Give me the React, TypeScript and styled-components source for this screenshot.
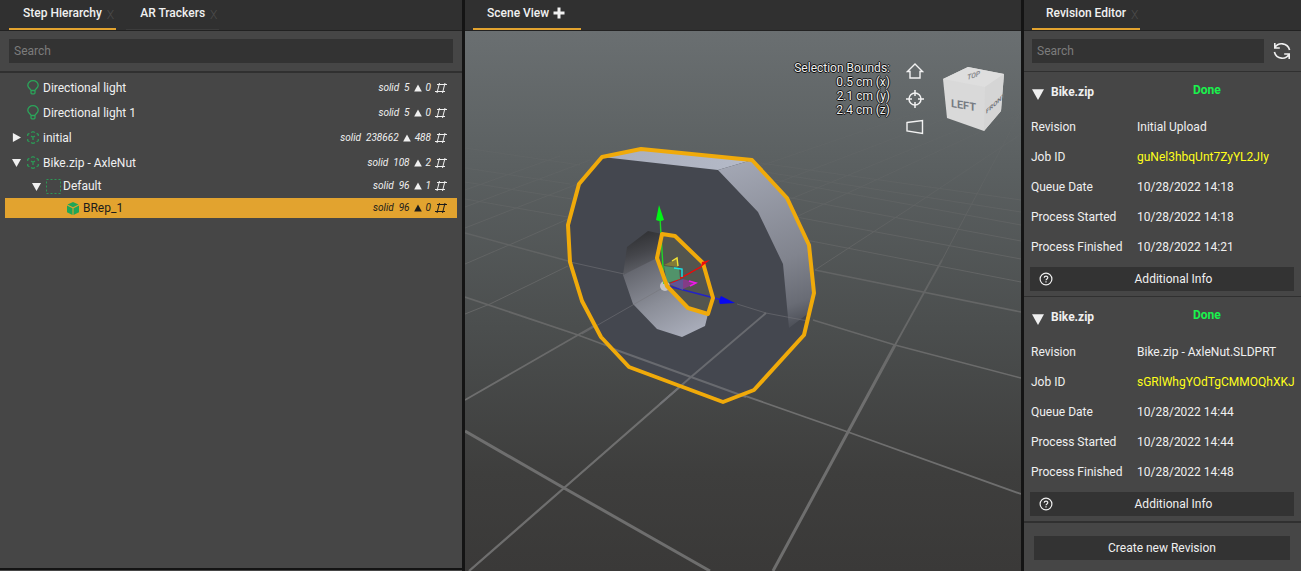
import React from "react";
import styled, { createGlobalStyle, css } from "styled-components";

const Global = createGlobalStyle`
  * { box-sizing: border-box; }
  html, body, #root { height: 100%; }
  body {
    margin: 0;
    overflow: hidden;
    background: #141414;
    color: #f0f0f0;
    font: 400 12px/14px Roboto, "Liberation Sans", sans-serif;
  }
  button, input { font: inherit; color: inherit; }
`;

const Workspace = styled.main`
  display: grid;
  grid-template-columns: minmax(300px, 462fr) minmax(0, 556fr) minmax(277px, 277fr);
  gap: 3px;
  height: 100%;
  min-height: 571px;
`;

const Column = styled.section`
  display: flex;
  flex-direction: column;
  min-width: 0;
  background: #464646;
`;

const TabBar = styled.div<{ $inset?: number }>`
  display: flex;
  flex: none;
  gap: 10px;
  height: 31px;
  padding: 0 ${(p) => p.$inset ?? 8}px;
  background: #303030;
  border-bottom: 1px solid #222222;
`;

const Tab = styled.div<{ $active?: boolean }>`
  display: flex;
  align-items: flex-start;
  gap: 5px;
  padding: 6px 2px 0 14px;
  border-bottom: ${(p) => (p.$active ? "2px solid #e2a32f" : "1px solid #3c3c3c")};
`;

const TabLabel = styled.button`
  padding: 0;
  border: 0;
  background: none;
  font-weight: 500;
  white-space: nowrap;
`;

const TabClose = styled.button`
  padding: 2px 0 0;
  border: 0;
  background: none;
  color: #4c4c4c;
  font-weight: 300;
`;

const TabAdd = styled.button`
  display: flex;
  padding: 1px 14px 0 0;
  margin-left: -1px;
  border: 0;
  background: none;
`;

const SearchBar = styled.div<{ $line: number; $inset: string }>`
  display: flex;
  flex: none;
  align-items: center;
  gap: 9px;
  padding: ${(p) => p.$inset};
  border-bottom: ${(p) => p.$line}px solid #303030;
`;

const SearchInput = styled.input`
  flex: 1;
  min-width: 0;
  height: 24px;
  padding: 0 5px;
  border: 0;
  outline: 0;
  background: #333333;
  &::placeholder { color: #7c7c7c; opacity: 1; }
`;

const IconButton = styled.button`
  display: flex;
  padding: 0;
  border: 0;
  background: none;
`;

const Tree = styled.ul`
  flex: 1;
  margin: 0;
  padding: 2px 5px;
  list-style: none;
`;

const Node = styled.li<{ $level: number; $selected?: boolean }>`
  display: flex;
  align-items: center;
  height: ${(p) => (p.$level ? 20 : 25)}px;
  margin: ${(p) => (p.$level ? "1px 0 2px" : "0")};
  padding: 0 10px 0 ${(p) => 4 + p.$level * 20}px;
  ${(p) => p.$selected && css`background: #e2a32f; color: #1c1c1c;`}
`;

const Toggle = styled.button`
  display: flex;
  justify-content: center;
  width: 14px;
  margin-right: 2px;
  padding: 0;
  border: 0;
  background: none;
`;

const NodeIcon = styled.span`
  display: flex;
  justify-content: center;
  width: 16px;
  margin-right: 2px;
`;

const NodeLabel = styled.span`
  flex: 1;
  white-space: nowrap;
`;

const Stats = styled.span`
  display: flex;
  align-items: center;
  gap: 4px;
  font-size: 10px;
  font-style: italic;
`;

const Footer = styled.div`
  height: 3px;
  border-top: 2px solid #141414;
`;

const Viewport = styled.div`
  position: relative;
  display: flex;
  flex: 1;
  min-height: 0;
  justify-content: flex-end;
  align-items: flex-start;
  padding: 30px 17px 0 0;
  background: linear-gradient(#6a6f71, #5b6061 25%, #4b4e4e 55%, #3e3e3d 82%, #3a3938);
`;

const SceneDrawing = styled.svg`
  position: absolute;
  inset: 0;
  width: 100%;
  height: 100%;
`;

const Bounds = styled.div`
  position: relative;
  text-align: right;
  text-shadow: 1px 0 #111, -1px 0 #111, 0 1px #111, 0 -1px #111;
`;

const ViewTools = styled.div`
  position: relative;
  display: flex;
  flex-direction: column;
  gap: 10px;
  margin: 1px 19px 0 16px;
`;

const CubeDrawing = styled.svg`
  position: relative;
  margin-top: 6px;
`;

const Revisions = styled.div`
  flex: 1;
`;

const Revision = styled.article`
  padding: 5px 7px 5px 6px;
  & + & { border-top: 1px solid #303030; }
`;

const RevisionHead = styled.header`
  display: grid;
  grid-template-columns: 21px 142px 1fr;
  height: 35px;
  padding-top: 8px;
`;

const RevisionToggle = styled.button`
  display: flex;
  align-items: flex-start;
  padding: 3px 0 0 2px;
  border: 0;
  background: none;
`;

const RevisionName = styled.h2`
  margin: 0;
  font-size: 12px;
  font-weight: 700;
`;

const Status = styled.strong`
  margin-top: -2px;
  color: #19f24d;
  font-weight: 700;
`;

const Fields = styled.dl`
  display: grid;
  grid-template-columns: 106px 1fr;
  grid-auto-rows: 30px;
  align-items: center;
  margin: 0 0 5px;
  padding-left: 1px;
  white-space: nowrap;
  dd, dt { margin: 0; }
`;

const JobLink = styled.a`
  color: #ffff1a;
  text-decoration: none;
`;

const InfoButton = styled.button`
  display: flex;
  align-items: center;
  width: 100%;
  height: 24px;
  padding: 0 0 0 9px;
  border: 0;
  background: #333333;
`;

const InfoLabel = styled.span`
  flex: 1;
`;

const CreateBar = styled.div`
  padding: 13px 11px 11px 10px;
  border-top: 2px solid #303030;
`;

const CreateButton = styled.button`
  width: 100%;
  height: 24px;
  padding: 0;
  border: 0;
  background: #333333;
`;

const Triangle = ({ dir, size = 9 }: { dir: "up" | "down" | "right"; size?: number }) => {
  const d = {
    up: "M5 .5L9.800 9.500H.2z",
    down: "M0 1H10L5 10z",
    right: "M1 0V10L10 5z",
  }[dir];
  return (
    <svg width={size} height={size} viewBox="0 0 10 10" fill="currentColor" aria-hidden="true">
      <path d={d} />
    </svg>
  );
};

const Frames = () => (
  <svg width="12" height="10" viewBox="0 0 12 10" fill="none" stroke="currentColor" aria-hidden="true">
    <path d="M2 1.500H12M0 8.500H10M4.500 0L2 10M10 0L7.500 10" />
  </svg>
);

const Bulb = () => (
  <svg width="12" height="15" viewBox="0 0 12 15" fill="none" stroke="#2ba55a" strokeWidth="1.300" aria-hidden="true">
    <path d="M4 10.500C4 9 .8 8 .8 5.200a5.200 4.500 0 0 1 10.400 0C11.200 8 8 9 8 10.500zM4 10.500v2.300q0 1 1 1h2q1 0 1-1v-2.300" />
  </svg>
);

const Assembly = () => (
  <svg width="12" height="13" viewBox="0 0 12 13" fill="none" stroke="#2c9856" strokeWidth="1.300" aria-hidden="true">
    <path d="M4 1.500L6 .7l2 .8M9.600 2.400l1.700 1V5M11.300 8v1.700l-1.700 1M8 11.600l-2 .8-2-.8M2.400 10.700l-1.700-1V8M.7 5V3.400l1.700-1" />
    <path d="M4 5.200L6 6.200l2-1M6 6.200V9" />
  </svg>
);

const Group = () => (
  <svg width="15" height="15" viewBox="0 0 15 15" fill="none" stroke="#2c9856" aria-hidden="true">
    <rect x=".5" y=".5" width="14" height="14" strokeDasharray="2 2" />
  </svg>
);

const Part = () => (
  <svg width="12" height="13" viewBox="0 0 12 13" fill="#1fa657" aria-hidden="true">
    <path d="M6 0l5.500 2.500L6 5.200.5 2.500zM0 3.500l5.500 2.700V13L0 10.200zM12 3.500L6.500 6.200V13L12 10.200z" />
  </svg>
);

const Plus = () => (
  <svg width="12" height="12" viewBox="0 0 12 12" stroke="#f0f0f0" strokeWidth="3" aria-hidden="true">
    <path d="M6 .5v11M.5 6h11" />
  </svg>
);

const Refresh = () => (
  <svg width="18" height="18" viewBox="0 0 18 18" fill="none" stroke="#f0f0f0" strokeWidth="1.600" aria-hidden="true">
    <path d="M1.800 1v5h5M1.800 5.800C5 0 14.500.3 16.600 8" />
    <path d="M16.200 17v-5h-5M16.200 12.200C13 18 3.500 17.700 1.400 10" />
  </svg>
);

const Help = () => (
  <svg width="14" height="14" viewBox="0 0 14 14" fill="none" stroke="#f0f0f0" strokeWidth="1.200" aria-hidden="true">
    <circle cx="7" cy="7" r="5.900" />
    <path d="M5.200 5.700c0-2.200 3.600-2.200 3.600-.1 0 1.300-1.800 1.400-1.800 2.700M7 9.300v1.200" />
  </svg>
);

const icons = { bulb: Bulb, assembly: Assembly, group: Group, part: Part };

type TreeNode = {
  label: string;
  icon: keyof typeof icons;
  level: number;
  open?: boolean;
  solids: number;
  frames: number;
  selected?: boolean;
};

const nodes: TreeNode[] = [
  { label: "Directional light", icon: "bulb", level: 0, solids: 5, frames: 0 },
  { label: "Directional light 1", icon: "bulb", level: 0, solids: 5, frames: 0 },
  { label: "initial", icon: "assembly", level: 0, open: false, solids: 238662, frames: 488 },
  { label: "Bike.zip - AxleNut", icon: "assembly", level: 0, open: true, solids: 108, frames: 2 },
  { label: "Default", icon: "group", level: 1, open: true, solids: 96, frames: 1 },
  { label: "BRep_1", icon: "part", level: 2, solids: 96, frames: 0, selected: true },
];

const revisions = [
  {
    revision: "Initial Upload",
    job: "guNel3hbqUnt7ZyYL2JIy",
    times: ["10/28/2022 14:18", "10/28/2022 14:18", "10/28/2022 14:21"],
  },
  {
    revision: "Bike.zip - AxleNut.SLDPRT",
    job: "sGRlWhgYOdTgCMMOQhXKJ",
    times: ["10/28/2022 14:44", "10/28/2022 14:44", "10/28/2022 14:48"],
  },
];

const Scene = () => (
  <SceneDrawing viewBox="465 31 556 540" preserveAspectRatio="xMidYMid slice" role="img" aria-label="Axle nut model">
    <defs>
      <linearGradient id="top" x1="0" x2="1">
        <stop offset="0" stopColor="#a9aebc" />
        <stop offset="1" stopColor="#b5bac8" />
      </linearGradient>
      <linearGradient id="rim" gradientUnits="userSpaceOnUse" x1="740" y1="160" x2="800" y2="330">
        <stop offset="0" stopColor="#a3a7b4" />
        <stop offset=".6" stopColor="#81848e" />
        <stop offset=".85" stopColor="#696c75" />
        <stop offset="1" stopColor="#454850" />
      </linearGradient>
      <linearGradient id="boreTop" gradientUnits="userSpaceOnUse" x1="642" y1="231" x2="655" y2="270">
        <stop offset="0" stopColor="#303134" />
        <stop offset=".5" stopColor="#45464b" />
        <stop offset="1" stopColor="#62646b" />
      </linearGradient>
      <linearGradient id="bore" gradientUnits="userSpaceOnUse" x1="645" y1="264" x2="682" y2="337">
        <stop offset="0" stopColor="#65676f" />
        <stop offset=".5" stopColor="#8b8e98" />
        <stop offset="1" stopColor="#a8acb9" />
      </linearGradient>
      <linearGradient id="fade" gradientUnits="userSpaceOnUse" x1="0" y1="60" x2="0" y2="400">
        <stop offset="0" stopColor="#fff" stopOpacity="0" />
        <stop offset=".35" stopColor="#fff" stopOpacity=".2" />
        <stop offset=".7" stopColor="#fff" stopOpacity=".6" />
        <stop offset="1" stopColor="#fff" stopOpacity=".9" />
      </linearGradient>
      <mask id="haze" maskUnits="userSpaceOnUse" x="465" y="31" width="556" height="540">
        <rect x="465" y="31" width="556" height="540" fill="url(#fade)" />
      </mask>
    </defs>

    <g fill="none" stroke="#747474" mask="url(#haze)">
      <path strokeWidth="1" d="M465 168L570 184M465 182L572 199M465 199L568 217M465 148L580 165M465 314L490 304L568 266M465 264L516 242L568 219M465 228L580 183M465 207L590 160M465 190L560 156" />
      <path strokeWidth="1" d="M786 197L1021 241M796 217L1021 259M806 240L1021 282M775 180L1021 225M765 172L1021 212M760 163L1021 200M798 216L1021 113M788 200L1021 104M815 270L907 210L1021 134M942 260L1021 111M774 184L1000 98M760 166L960 98" />
      <path strokeWidth="1.500" d="M465 233L583 265L625 275M815 270L1021 312M813 320L895 345L1021 378" />
      <path strokeWidth="1.800" d="M465 297L578 335L691 377L848 432L1021 494M465 400L578 335L632 304M895 345L942 260" />
      <path strokeWidth="3" d="M465 431L564 488L710 571M773 571L848 432L895 345" />
      <path strokeWidth="2.300" d="M469 571L564 488L691 377" />
    </g>

    <path fill="#44474f" d="M602 157L641 149L752 160L787 198L809 245L814 293L804 335L754 390L723 402L629 367L601 337L582 301L570 262L568 225L579 184z" />
    <path fill="url(#top)" d="M602 157L641 149L752 160L718 170z" />
    <path fill="url(#rim)" d="M718 170L752 160L787 198L809 245L814 293L810 312L789 328L783 264L758 212z" />
    <path fill="url(#boreTop)" d="M648 231L662 234L657 258L658 261L623 275L627 247z" />
    <path fill="url(#bore)" d="M657 258L623 275L633 304L657 329L682 337L705 326L708 314L688 308L667 286z" />
    <path fill="#53554f" d="M662 234L675 236L703 263L713 298L708 314L688 308L667 286L657 258z" />
    <path fill="none" stroke="#74757a" strokeWidth="1" opacity=".55" d="M570 262L624 274M582 334L666 286M737 304L766 313L808 321" />
    <path fill="none" stroke="#747579" strokeWidth="2" opacity=".75" d="M608 347L691 377L746 397M660 404L691 377L766 313" />

    <g fill="none" strokeWidth="1.400">
      <circle cx="665" cy="286" r="5" fill="#c4c4c6" stroke="none" />
      <path stroke="#ff0000" d="M670 284L706 264" />
      <path stroke="#1fd628" d="M664 284L660 218" />
      <path stroke="#2222c8" d="M668 286L722 300" />
      <path fill="#51936a" d="M664 266L679 268L680 279L667 283z" stroke="none" />
      <path fill="#5f5595" d="M669 284L683 279L683 290z" stroke="none" />
      <path fill="#843c86" d="M683 279L697 283L683 289z" stroke="none" />
      <path fill="#827b38" d="M664 265L678 258L678 267z" stroke="none" />
      <path stroke="#f2e435" d="M672 261L677 258L678 266" />
      <path stroke="#19e6ea" d="M674 268L682 269L682 277" />
      <path stroke="#f019e8" d="M689 281L696 283L690 286" />
    </g>
    <g fill="none" stroke="#f0aa0a" strokeWidth="4" strokeLinejoin="round">
      <path d="M602 157L641 149L752 160L787 198L809 245L814 293L804 335L754 390L723 402L629 367L601 337L582 301L570 262L568 225L579 184z" />
      <path d="M662 234L675 236L703 263L713 298L708 314L688 308L667 286L657 258z" />
    </g>
    <path fill="#00f514" d="M659 205L664 220Q660 222 656 220z" />
    <path fill="#ee0c0c" d="M710 260L701 267L702 262z" />
    <path fill="#0808f0" d="M721 296Q718 301 720 304L735 303z" />
  </SceneDrawing>
);

const Cube = () => (
  <CubeDrawing width="61" height="65" viewBox="943 67 61 65" fontFamily="Roboto, sans-serif" fontWeight="700" role="img" aria-label="View cube">
    <path fill="#d9d9d9" d="M943 79L968 67L1004 74L1001 111L984 131L947 118z" />
    <path fill="#dedede" d="M943 79L968 67L1004 74L985 87z" />
    <path fill="#d5d5d5" d="M985 87L1004 74L1001 111L984 131z" />
    <text transform="translate(951 107) skewY(9)" fontSize="11" fill="#777b82">LEFT</text>
    <text transform="translate(986 114) skewY(-42)" fontSize="6" fill="#6f7277">FRONT</text>
    <text transform="translate(967 80) rotate(-18) skewX(-25)" fontSize="7" fill="#8a8c90">TOP</text>
  </CubeDrawing>
);

export default function App() {
  return (
    <>
      <Global />
      <Workspace>
        <Column>
          <TabBar $inset={9}>
            <Tab $active>
              <TabLabel>Step Hierarchy</TabLabel>
              <TabClose aria-label="Close Step Hierarchy">X</TabClose>
            </Tab>
            <Tab>
              <TabLabel>AR Trackers</TabLabel>
              <TabClose aria-label="Close AR Trackers">X</TabClose>
            </Tab>
          </TabBar>
          <SearchBar $line={2} $inset="8px 9px">
            <SearchInput type="text" placeholder="Search" aria-label="Search hierarchy" />
          </SearchBar>
          <Tree>
            {nodes.map((n) => {
              const Icon = icons[n.icon];
              return (
                <Node key={n.label} $level={n.level} $selected={n.selected}>
                  {n.open === undefined ? (
                    <Toggle as="span" />
                  ) : (
                    <Toggle aria-label={`Toggle ${n.label}`} aria-expanded={n.open}>
                      <Triangle dir={n.open ? "down" : "right"} />
                    </Toggle>
                  )}
                  <NodeIcon><Icon /></NodeIcon>
                  <NodeLabel>{n.label}</NodeLabel>
                  <Stats>
                    <span>solid&nbsp; {n.solids}</span>
                    <Triangle dir="up" size={8} />
                    <span>{n.frames}</span>
                    <Frames />
                  </Stats>
                </Node>
              );
            })}
          </Tree>
          <Footer />
        </Column>

        <Column>
          <TabBar>
            <Tab $active>
              <TabLabel>Scene View</TabLabel>
              <TabAdd aria-label="Add view"><Plus /></TabAdd>
            </Tab>
          </TabBar>
          <Viewport>
            <Scene />
            <Bounds>
              Selection Bounds:<br />0.5 cm (x)<br />2.1 cm (y)<br />2.4 cm (z)
            </Bounds>
            <ViewTools>
              <IconButton aria-label="Home view">
                <svg width="18" height="18" viewBox="0 0 18 18" fill="none" stroke="#f2f2f2" strokeWidth="1.400">
                  <path d="M1.500 9.500L9 2l7.500 7.500H14V16H4V9.500z" />
                </svg>
              </IconButton>
              <IconButton aria-label="Focus selection">
                <svg width="18" height="18" viewBox="0 0 18 18" fill="none" stroke="#f2f2f2" strokeWidth="1.500">
                  <circle cx="9" cy="9" r="6" />
                  <path d="M9 0v6M9 12v6M0 9h6M12 9h6" />
                </svg>
              </IconButton>
              <IconButton aria-label="Perspective">
                <svg width="18" height="18" viewBox="0 0 18 18" fill="none" stroke="#f2f2f2" strokeWidth="1.400">
                  <path d="M1 4.500L16.500 2.500V15.500L1 13z" />
                </svg>
              </IconButton>
            </ViewTools>
            <Cube />
          </Viewport>
        </Column>

        <Column>
          <TabBar>
            <Tab $active>
              <TabLabel>Revision Editor</TabLabel>
              <TabClose aria-label="Close Revision Editor">X</TabClose>
            </Tab>
          </TabBar>
          <SearchBar $line={1} $inset="8px 10px 8px 8px">
            <SearchInput type="text" placeholder="Search" aria-label="Search revisions" />
            <IconButton aria-label="Refresh"><Refresh /></IconButton>
          </SearchBar>
          <Revisions>
            {revisions.map((r) => (
              <Revision key={r.job}>
                <RevisionHead>
                  <RevisionToggle aria-label="Toggle revision" aria-expanded="true">
                    <Triangle dir="down" size={12} />
                  </RevisionToggle>
                  <RevisionName>Bike.zip</RevisionName>
                  <Status>Done</Status>
                </RevisionHead>
                <Fields>
                  <dt>Revision</dt>
                  <dd>{r.revision}</dd>
                  <dt>Job ID</dt>
                  <dd><JobLink href="#">{r.job}</JobLink></dd>
                  <dt>Queue Date</dt>
                  <dd>{r.times[0]}</dd>
                  <dt>Process Started</dt>
                  <dd>{r.times[1]}</dd>
                  <dt>Process Finished</dt>
                  <dd>{r.times[2]}</dd>
                </Fields>
                <InfoButton>
                  <Help />
                  <InfoLabel>Additional Info</InfoLabel>
                </InfoButton>
              </Revision>
            ))}
          </Revisions>
          <CreateBar>
            <CreateButton>Create new Revision</CreateButton>
          </CreateBar>
        </Column>
      </Workspace>
    </>
  );
}
